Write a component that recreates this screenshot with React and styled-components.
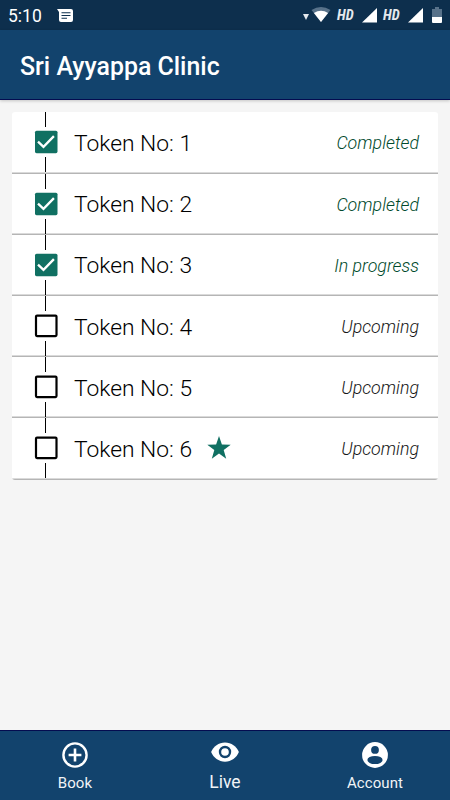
import React from 'react';
import styled, { createGlobalStyle } from 'styled-components';

const tokens = [
  { id: 1, status: 'Completed' },
  { id: 2, status: 'Completed' },
  { id: 3, status: 'In progress' },
  { id: 4, status: 'Upcoming' },
  { id: 5, status: 'Upcoming' },
  { id: 6, status: 'Upcoming', mine: true },
];

const GlobalStyle = createGlobalStyle`
  * {
    box-sizing: border-box;
  }
  body {
    margin: 0;
    background-color: #f5f5f5;
    font-family: Roboto, sans-serif;
  }
`;

const Screen = styled.div`
  width: 100%;
  max-width: 450px;
  height: 800px;
  display: flex;
  flex-direction: column;
  overflow: hidden;
`;

const StatusBar = styled.div`
  height: 30px;
  flex: none;
  display: flex;
  justify-content: space-between;
  background-color: #0d2f4d;
  color: white;
`;

const StatusLeft = styled.div`
  display: flex;
  align-items: center;
  gap: 15px;
  padding: 1px 0 0 8px;
`;

const StatusRight = styled.div`
  display: flex;
  padding-top: 7px;
`;

const Clock = styled.span`
  font-size: 17.5px;
  line-height: 20px;
  font-weight: 400;
  width: 34px;
  padding-top: 1px;
  white-space: nowrap;
`;

const Hd = styled.span`
  width: 19px;
  margin: 0 6px;
  font-family: 'Roboto Condensed', Roboto, sans-serif;
  font-size: 14.5px;
  line-height: 17px;
  font-weight: 700;
  font-style: italic;
  color: #e4e9ee;
`;

const Icon = styled.svg`
  display: block;
  flex: none;
  overflow: visible;
`;

const Header = styled.header`
  height: 70px;
  flex: none;
  display: flex;
  align-items: center;
  padding: 4px 20px 0;
  background-color: #12436d;
  border-bottom: 1px solid #040c50;
  box-shadow: 0 1px 3px rgba(0, 0, 0, 0.2);
`;

const Title = styled.h1`
  margin: 0;
  font-size: 24.9px;
  line-height: 30px;
  font-weight: 500;
  color: white;
`;

const Content = styled.main`
  flex: 1;
  padding: 12.4px 12px 0;
`;

const TokenList = styled.div`
  border-radius: 3px;
  background-color: white;
  overflow: hidden;
`;

const Row = styled.div`
  height: 61.2px;
  display: flex;
  align-items: center;
  padding: 0 19px 0 19px;
  box-shadow: inset 0 -1.5px 0 #b5b5b5;
`;

const Timeline = styled.div`
  align-self: stretch;
  width: 30px;
  padding-bottom: 1.2px;
  display: flex;
  flex-direction: column;
  align-items: center;
`;

const Line = styled.div`
  flex: 1;
  width: 1px;
  margin-right: 1px;
  background-color: black;
`;

const TokenName = styled.span`
  margin: 2px 0 0 13px;
  font-size: 22.8px;
  font-weight: 300;
  line-height: 28px;
  color: black;
  width: 118px;
  white-space: nowrap;
`;

const Status = styled.span`
  margin-left: auto;
  padding-top: 1px;
  font-size: 17.8px;
  line-height: 22px;
  font-weight: 300;
  font-style: italic;
  color: ${props => (props.$active ? '#004a2c' : '#161616')};
`;

const StarWrapper = styled.div`
  margin: -1px 0 0 15.4px;
`;

const NavBar = styled.nav`
  height: 70px;
  flex: none;
  display: grid;
  grid-template-columns: repeat(3, 1fr);
  background-color: #12436d;
  border-top: 1px solid #040c50;
`;

const NavItem = styled.div`
  display: flex;
  flex-direction: column;
  align-items: center;
  padding-top: ${props => (props.$active ? 6 : 9)}px;
`;

const NavLabel = styled.span`
  margin-top: ${props => (props.$active ? 4 : 2)}px;
  font-size: ${props => (props.$active ? 17.5 : 15)}px;
  line-height: 22px;
  letter-spacing: ${props => (props.$active ? 0 : 0.1)}px;
  color: #f1f4f7;
`;

function Checkbox({ checked }) {
  return (
    <Icon width="30" height="30" viewBox="0 0 30 30" fill="none">
      {checked ? (
        <>
          <rect x="4" y="3.7" width="22.5" height="22.5" rx="1.6" fill="#107062" />
          <path d="M7 14.6l5.5 5.3L22.9 9.1" stroke="white" strokeWidth="2.3" />
        </>
      ) : (
        <rect x="5" y="4.6" width="20.5" height="20.5" rx="1" stroke="black" strokeWidth="2.2" />
      )}
    </Icon>
  );
}

function Signal() {
  return (
    <Icon width="15" height="16" viewBox="0 0 15 16">
      <path d="M15 1v14.5H0z" fill="white" />
    </Icon>
  );
}

function MessageIcon() {
  return (
    <Icon width="16" height="14" viewBox="0 0 16 14">
      <path d="M0 0h14q2 0 2 2v9q0 2-2 2H4q-2 0-2-2V3z" fill="white" />
      <path d="M4.5 3.7h9M4.5 6.5h9M4.5 9.3h5.5" stroke="#0d2f4d" strokeWidth="1.1" />
    </Icon>
  );
}

function BookIcon() {
  return (
    <Icon width="30" height="30" viewBox="0 0 30 30" fill="none" stroke="white">
      <circle cx="15" cy="15" r="11.6" strokeWidth="2.4" />
      <path d="M15 8.6v12.8M8.6 15h12.8" strokeWidth="2.6" />
    </Icon>
  );
}

function LiveIcon() {
  return (
    <Icon width="30" height="30" viewBox="0 0 24 24" fill="white">
      <path d="M12 4.4C7 4.4 2.7 7.5.9 12c1.8 4.5 6.1 7.7 11.1 7.7s9.3-3.2 11.1-7.7C21.3 7.5 17 4.4 12 4.4z" />
      <circle cx="12" cy="12" r="4" stroke="#12436d" strokeWidth="1.9" />
    </Icon>
  );
}

function AccountIcon() {
  return (
    <Icon width="30" height="30" viewBox="0 0 30 30" fill="#12436d">
      <circle cx="15" cy="15" r="12.9" fill="white" />
      <circle cx="15" cy="9.9" r="3.9" />
      <ellipse cx="15" cy="20" rx="7.6" ry="4.1" />
    </Icon>
  );
}

function App() {
  return (
    <Screen>
      <GlobalStyle />
      <StatusBar>
        <StatusLeft>
          <Clock>5:10</Clock>
          <MessageIcon />
        </StatusLeft>
        <StatusRight>
          <Icon width="6" height="16" viewBox="0 0 6 16">
            <path d="M0 7h6L3 13z" fill="#e4e9ee" />
          </Icon>
          <Icon width="22" height="16" viewBox="0 0 22 16">
            <path d="M2.5 3Q12-3 21.5 3L12 15z" fill="#58728a" />
            <path d="M4.9 6Q12 1.500 19.1 6L12 15z" fill="white" />
          </Icon>
          <Hd>HD</Hd>
          <Signal />
          <Hd>HD</Hd>
          <Signal />
          <Icon width="27" height="16" viewBox="0 0 27 16">
            <path d="M9 2h3V0h4v2h3v8H9z" fill="#58728a" />
            <path d="M9 10h10v5q0 1-1 1h-8q-1 0-1-1z" fill="white" />
          </Icon>
        </StatusRight>
      </StatusBar>
      <Header>
        <Title>Sri Ayyappa Clinic</Title>
      </Header>
      <Content>
        <TokenList>
          {tokens.map(token => (
            <Row key={token.id}>
              <Timeline>
                <Line />
                <Checkbox checked={token.status !== 'Upcoming'} />
                <Line />
              </Timeline>
              <TokenName>Token No: {token.id}</TokenName>
              {token.mine && (
                <StarWrapper>
                  <Icon width="24" height="24" viewBox="0 0 24 24">
                    <path
                      d="M12 0l2.9 8.6 8.8.1-7 5.300 2.500 8.700L12 17.500l-7.200 5.200 2.500-8.700-7-5.300 8.800-.1z"
                      fill="#107062"
                    />
                  </Icon>
                </StarWrapper>
              )}
              <Status $active={token.status !== 'Upcoming'}>{token.status}</Status>
            </Row>
          ))}
        </TokenList>
      </Content>
      <NavBar>
        <NavItem>
          <BookIcon />
          <NavLabel>Book</NavLabel>
        </NavItem>
        <NavItem $active>
          <LiveIcon />
          <NavLabel $active>Live</NavLabel>
        </NavItem>
        <NavItem>
          <AccountIcon />
          <NavLabel>Account</NavLabel>
        </NavItem>
      </NavBar>
    </Screen>
  );
}

export default App;
